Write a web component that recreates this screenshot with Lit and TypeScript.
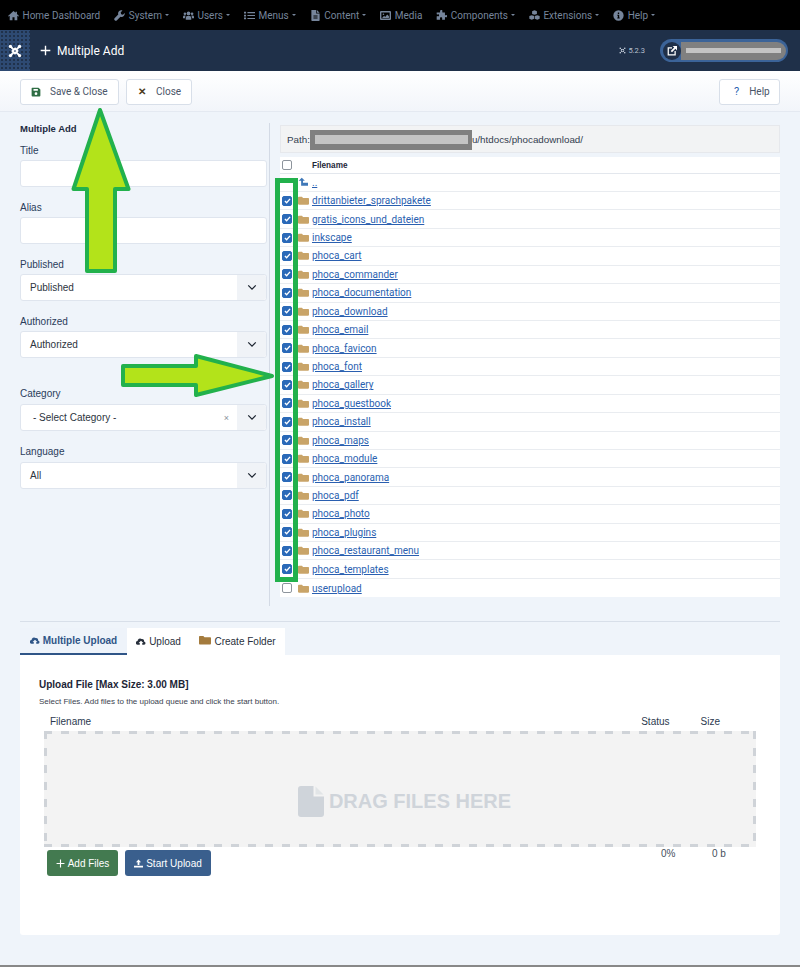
import { LitElement, html, css, svg } from "lit";
import { customElement } from "lit/decorators.js";

const FOLDERS = ["drittanbieter_sprachpakete","gratis_icons_und_dateien","inkscape","phoca_cart","phoca_commander","phoca_documentation","phoca_download","phoca_email","phoca_favicon","phoca_font","phoca_gallery","phoca_guestbook","phoca_install","phoca_maps","phoca_module","phoca_panorama","phoca_pdf","phoca_photo","phoca_plugins","phoca_restaurant_menu","phoca_templates"];

const ic = (d: unknown, cls = "i", vb = "0 0 16 16") => html`<svg class=${cls} viewBox=${vb} fill="currentColor">${d}</svg>`;
const HOME = svg`<path d="M8 1.500 0 8.600l.9 1L2.500 8.200V15h4v-4.500h3V15h4V8.200l1.600 1.400.9-1-3-2.700V2.500h-2v1.600z"/>`;
const WRENCH = svg`<path d="M15.600 4.200 13 6.800l-2.600-.7-.7-2.600L12.300.9C10.600.1 8.500.5 7.200 1.800 5.900 3.100 5.600 5 6.200 6.600L.8 12a2.300 2.300 0 0 0 3.200 3.200l5.400-5.400c1.600.6 3.500.3 4.800-1 1.300-1.300 1.700-3.100 1.400-4.600z"/>`;
const USERS = svg`<circle cx="8" cy="5" r="2.700"/><circle cx="2.800" cy="5.500" r="1.900"/><circle cx="13.200" cy="5.500" r="1.900"/><path d="M4 14v-2.500C4 9.500 5.500 8.500 8 8.500s4 1 4 3V14zM0 12v-2c0-1.300 1-2 2.600-2 .5 0 1 .1 1.300.2C3.200 9 3 10 3 11v1zM16 12v-2c0-1.300-1-2-2.600-2-.5 0-1 .1-1.300.2.700.8.900 1.800.9 2.800v1z"/>`;
const LIST = svg`<path d="M0 2.500h3v2.500H0zM0 6.800h3v2.500H0zM0 11h3v2.500H0zM5 3h11v1.600H5zM5 7.300h11v1.600H5zM5 11.500h11v1.600H5z"/>`;
const FILE = svg`<path d="M2 0h7v5h5v10a1 1 0 0 1-1 1H3a1 1 0 0 1-1-1zM10 0l4 4h-4zM5 8v1.300h6V8zM5 11v1.300h6V11z" fill-rule="evenodd"/>`;
const IMAGE = svg`<path fill-rule="evenodd" d="M1.500 1.500h13A1.500 1.500 0 0 1 16 3v10a1.500 1.500 0 0 1-1.500 1.500h-13A1.500 1.500 0 0 1 0 13V3a1.500 1.500 0 0 1 1.500-1.500zM2 3.500v9h12v-9zM5 5a1.200 1.200 0 1 1 0 2.400A1.200 1.200 0 0 1 5 5zM3 11.500l3-3 1.500 1.500 3-3.500 2.500 2.500v2.500z"/>`;
const PUZZLE = svg`<path d="M6 1.500C6 .6 6.800 0 7.700 0s1.700.6 1.700 1.500c0 .6-.4 1-.4 1.500 0 .4.300.6.800.6H13v3.300c0 .5.200.8.600.8.500 0 .9-.4 1.500-.4.900 0 .9.800.9 1.700s0 1.700-.9 1.700c-.6 0-1-.4-1.500-.4-.4 0-.6.300-.6.800V14H9.500c-.5 0-.8-.2-.8-.6 0-.5.400-.9.400-1.500 0-.9-.8-1.400-1.700-1.400s-1.700.5-1.700 1.400c0 .6.400 1 .4 1.500 0 .4-.3.600-.8.600H1V9.700c0-.5.300-.8.700-.8.500 0 .8.400 1.400.4C4 9.300 4.500 8.600 4.500 7.700S4 6 3.100 6c-.6 0-.9.400-1.400.4-.4 0-.7-.3-.7-.8V3.600h4.300c.5 0 .8-.2.800-.6 0-.5-.6-.9-.1-1.500z"/>`;
const CUBES = svg`<path d="M8 .5l3.500 1.300v3.900L8 7 4.500 5.700V1.800zM4 7.500l3.500 1.300v4L4 14.200.5 12.800v-4zM12 7.500l3.500 1.300v4L12 14.200l-3.500-1.400v-4z"/>`;
const INFO = svg`<path fill-rule="evenodd" d="M8 .5a7.500 7.500 0 1 1 0 15 7.500 7.500 0 0 1 0-15zM7 3.500v2.200h2V3.500zM6.300 7v1.500H7v2.300h-.7v1.500h3.400v-1.500H9V7z"/>`;
const SAVE = svg`<path fill-rule="evenodd" d="M2 1h10l3 3v9.500a1.500 1.500 0 0 1-1.500 1.500h-11A1.500 1.500 0 0 1 1 13.500V2.500A1.500 1.500 0 0 1 2 1zM4 3v3h7V3zM8 8.500a2.200 2.200 0 1 0 0 4.400 2.200 2.200 0 0 0 0-4.400z"/>`;
const CLOUD = svg`<path d="M12.800 7A3 3 0 0 0 9 3.300 4 4 0 0 0 2.500 6.500 3 3 0 0 0 3 12.500h3V9.500H4.200L8 5.800l3.800 3.700H10v3h3a2.800 2.800 0 0 0-.2-5.500z"/>`;
const FOLDER = svg`<path d="M1.300 2.500h4.500l1.500 1.700h7.400c.7 0 1.300.6 1.300 1.300v7.200c0 .7-.6 1.300-1.300 1.300H1.300C.6 14 0 13.400 0 12.700V3.800c0-.7.600-1.300 1.300-1.300z"/>`;
const JOOMLA = svg`<g fill="none" stroke="currentColor" stroke-width="2.200" stroke-linecap="round"><path d="M8 5.200 10.800 8 8 10.800 5.200 8z"/><path d="M3 3l3.200 3.200M13 3 9.800 6.200M3 13l3.200-3.200M13 13l-3.200-3.200"/></g><circle cx="2.800" cy="2.800" r="1.900"/><circle cx="13.200" cy="2.800" r="1.900"/><circle cx="2.800" cy="13.200" r="1.900"/><circle cx="13.200" cy="13.200" r="1.900"/>`;
const PLUS = svg`<path d="M7 1h2v6h6v2H9v6H7V9H1V7h6z"/>`;
const UPLOAD = svg`<path d="M8 1l4.500 4.800H9.600v5H6.400v-5H3.500zM0 12h16v3H0z"/>`;
const BIGFILE = svg`<path d="M3 0h12.500v10.500H26V28a3 3 0 0 1-3 3H3a3 3 0 0 1-3-3V3a3 3 0 0 1 3-3z"/><path d="M17.500 0.500 25.500 8.500h-8z" opacity=".45"/>`;
const CHEV = html`<svg class="chev" viewBox="0 0 12 8" fill="none" stroke="#1c2530" stroke-width="1.500"><path d="M1.500 1.500 6 6l4.500-4.500"/></svg>`;

const NAV: [string, unknown, boolean][] = [["Home Dashboard",HOME,false],["System",WRENCH,true],["Users",USERS,true],["Menus",LIST,true],["Content",FILE,true],["Media",IMAGE,false],["Components",PUZZLE,true],["Extensions",CUBES,true],["Help",INFO,true]];

@customElement("app-root")
export class AppRoot extends LitElement {
  static styles = css`
    :host { display:block; position:relative; width:800px; height:967px; overflow:hidden; background:#eff4fa; font-family:"Liberation Sans",Arial,sans-serif; color:#22314a; font-size:10.500px; box-sizing:border-box; }
    * { box-sizing:border-box; }
    svg { display:block; flex:none; }
    .topnav { height:30px; background:#000; display:flex; align-items:center; padding-left:8px; gap:14px; font-family:Roboto,sans-serif; font-size:10px; color:#76859b; }
    .nav-item { display:flex; align-items:center; gap:3.500px; white-space:nowrap; }
    .nav-item .i { width:11px; height:11px; }
    .caret { width:0; height:0; border:2.750px solid transparent; border-top-color:#76859b; border-bottom:0; margin-left:-.5px; }
    .head { height:41px; background:#1f3049; display:flex; align-items:center; color:#fff; }
    .brand { width:30px; align-self:stretch; background-color:#2e4a72; background-image:radial-gradient(#1f3049 .7px,transparent .9px); background-size:4px 4px; display:flex; align-items:center; justify-content:center; margin-right:10px; }
    .brand svg { width:14px; height:14px; color:#fff; }
    .head .plus { width:11px; height:11px; margin-right:6px; }
    .head-title { font-family:Roboto,sans-serif; font-size:12px; }
    .head-right { margin-left:auto; display:flex; align-items:center; margin-right:12px; }
    .ver { display:flex; align-items:center; gap:2px; font-family:Roboto,sans-serif; font-size:7.500px; color:#b8c2d0; margin-right:15px; }
    .ver svg { width:7px; height:7px; }
    .pill { width:128px; height:23px; border-radius:12px; background:#3b6398; padding:2.500px; display:flex; align-items:center; }
    .pill-in { flex:1; height:18px; border-radius:0 9px 9px 0; background:#808080; display:flex; align-items:center; padding-right:5px; }
    .pill-ic { width:18px; height:18px; border-radius:9px; background:#1f3049; display:flex; align-items:center; justify-content:center; }
    .pill-ic svg { width:10px; height:10px; color:#fff; }
    .pill-bar { flex:1; height:5px; background:#c4c4c4; margin-left:5px; }
    .toolbar { height:41px; background:linear-gradient(#fff,#f2f5fa); border-bottom:1px solid #e4e9f1; display:flex; padding:8px 20px 0; gap:7px; }
    .tbtn { height:26px; background:#fff; border:1px solid #d8dfe9; border-radius:3px; display:flex; align-items:center; color:#4a5568; font-family:Roboto,sans-serif; font-size:10px; padding:0 10px 1px; }
    .tbtn .i { width:10px; height:10px; margin-right:9px; }
    .save { width:99px; } .save .i { color:#2f6d44; }
    .close { width:66px; } .close .x { font-size:10px; margin-right:10px; margin-left:1px; line-height:1; font-weight:bold; color:#4a3a20; }
    .help { width:61px; margin-left:auto; } .help .q { color:#2a5fb0; font-size:11px; margin:0 10px 0 4px; }
    .main { display:flex; padding:11px 20px 0; height:494px; }
    .left { width:247px; }
    .sect { font-weight:bold; font-size:9.500px; line-height:12px; margin-bottom:7px; color:#1c2a40; }
    .lbl { height:18px; line-height:17px; font-size:10px; color:#2a3c5a; }
    .field { margin-bottom:12px; }
    .field.far { margin-bottom:27px; }
    .field.tall .lbl { height:19px; }
    .ctl { height:27px; background:#fff; border:1px solid #dfe5ee; border-radius:3px; display:flex; align-items:center; padding-left:9px; font-size:10px; color:#2c3440; }
    .sel-arrow { margin-left:auto; width:29px; align-self:stretch; background:#f0f3f7; display:flex; align-items:center; justify-content:center; border-radius:0 3px 3px 0; }
    .chev { width:10px; height:7px; }
    .clear { margin-left:auto; color:#8a929c; font-size:9px; margin-right:8px; }
    .clear + .sel-arrow { margin-left:0; }
    .indent { padding-left:3px; }
    .vline { width:1px; background:#d3dae5; margin-left:2px; margin-right:10px; height:483px; }
    .right { width:500px; }
    .path { height:28px; margin-top:2px; padding-top:1px; background:#f2f3f4; border:1px solid #e6e8ec; display:flex; align-items:center; padding-left:6px; font-size:9.800px; color:#33404f; white-space:nowrap; }
    .redact { display:flex; align-items:center; width:162px; height:20px; background:#808080; margin:0; padding:0 4px 0 5px; }
    .redact i { display:block; width:100%; height:9px; background:#c4c4c4; }
    .table { margin-top:4px; background:#fff; }
    .thead { height:16.600px; padding-top:1px; border-bottom:1px solid #e3e7ed; display:flex; align-items:center; font-weight:bold; font-size:8.200px; color:#1e2838; }
    .row { height:18.430px; border-bottom:1px solid #e9ecf0; display:flex; align-items:center; }
    .row:last-child { border-bottom:0; }
    .cb { width:10px; height:10px; border-radius:2px; margin-left:2px; margin-right:6px; flex:none; border:1px solid #8d949c; background:#fff; }
    .cb.on { background:#2a69b8; border-color:#2a69b8; display:flex; align-items:center; justify-content:center; }
    .cb.on svg { width:7px; height:6px; }
    .fname { margin-left:14px; }
    .fold { width:11px; height:11px; color:#c9a468; margin-right:3px; }
    .up { width:10px; height:10px; color:#3f78b8; margin-right:4px; }
    a { color:#2a5fb0; text-decoration:underline; font-family:Roboto,sans-serif; font-size:10px; }
    .sep { height:1px; margin:15px 20px 0; background:#d8dfe9; }
    .tabs { display:flex; margin:6px 20px 0; height:27px; }
    .tab { display:flex; align-items:center; justify-content:center; gap:3px; background:#fff; font-size:10px; color:#28303c; width:63px; }
    .tab .i { width:10px; height:10px; }
    .tab.on { width:107px; background:#eef3fa; font-weight:bold; color:#2f5587; border-bottom:2px solid #2f5587; }
    .tab.w { width:95px; }
    .tab .i.tan { color:#a47b3d; width:12px; height:12px; margin-top:-3px; }
    .panel { margin:0 20px; height:280px; background:#fff; border-radius:0 0 3px 3px; padding:24px 19px 0; position:relative; }
    .ptitle { font-weight:bold; font-size:10px; line-height:12px; color:#1c2536; }
    .psub { font-size:8px; line-height:10px; margin-top:6px; color:#3a424e; }
    .cols { display:flex; margin-top:9px; padding-left:11px; font-size:10px; height:15px; line-height:12px; color:#2c3a50; }
    .cols .st { margin-left:auto; } .cols .sz { margin-left:31px; margin-right:41px; }
    .drop { margin-left:5px; width:712px; height:116px; background-color:#f3f3f3; background-image:repeating-linear-gradient(90deg,#cfd3d8 0 8px,transparent 8px 17px),repeating-linear-gradient(90deg,#cfd3d8 0 8px,transparent 8px 17px),repeating-linear-gradient(#cfd3d8 0 8px,transparent 8px 17px),repeating-linear-gradient(#cfd3d8 0 8px,transparent 8px 17px); background-size:100% 3px,100% 3px,3px 100%,3px 100%; background-position:0 0,0 100%,0 0,100% 0; background-repeat:no-repeat; display:flex; align-items:center; justify-content:center; color:#cfd4da; font-weight:bold; font-size:20px; gap:5px; padding:24px 0 0 9px; }
    .drop svg { width:26px; height:31px; }
    .acts { display:flex; margin:3px 0 0 8px; }
    .btn { height:26px; border-radius:3px; color:#fff; display:flex; align-items:center; font-size:10px; gap:3px; justify-content:center; }
    .btn .i { width:9px; height:9px; }
    .btn.g { width:71px; background:#437a50; }
    .btn.b { width:86px; background:#3a5f8d; margin-left:7px; }
    .stat { display:flex; font-size:10px; color:#46505c; position:absolute; top:193px; left:641px; }
    .stat .p { width:51px; }
    .bottom { position:absolute; left:0; right:0; bottom:0; height:2px; background:#888; }
    .marks { position:absolute; left:0; top:0; pointer-events:none; }
  `;

  render() {
    const check = html`<svg viewBox="0 0 8 7" fill="none" stroke="#fff" stroke-width="1.600"><path d="M1 3.500 3 5.500 7 1"/></svg>`;
    return html`
      <div class="topnav">
        ${NAV.map(([t, d, c]) => html`<div class="nav-item">${ic(d)}<span>${t}</span>${c ? html`<span class="caret"></span>` : ""}</div>`)}
      </div>
      <div class="head">
        <div class="brand">${ic(JOOMLA, "")}</div>
        ${ic(PLUS, "plus")}
        <span class="head-title">Multiple Add</span>
        <div class="head-right">
          <div class="ver">${ic(JOOMLA, "")}5.2.3</div>
          <div class="pill"><div class="pill-ic">${ic(svg`<path fill-rule="evenodd" d="M1 2h7v2H3v9h9V8h2v7H1zM9 0h7v7l-2.500-2.500L8 10 6 8l5.500-5.500z"/>`, "")}</div><div class="pill-in"><div class="pill-bar"></div></div></div>
        </div>
      </div>
      <div class="toolbar">
        <div class="tbtn save">${ic(SAVE)}Save &amp; Close</div>
        <div class="tbtn close"><span class="x">✕</span>Close</div>
        <div class="tbtn help"><span class="q">?</span>Help</div>
      </div>
      <div class="main">
        <div class="left">
          <div class="sect">Multiple Add</div>
          <div class="field"><div class="lbl">Title</div><div class="ctl"></div></div>
          <div class="field"><div class="lbl">Alias</div><div class="ctl"></div></div>
          <div class="field"><div class="lbl">Published</div><div class="ctl">Published<div class="sel-arrow">${CHEV}</div></div></div>
          <div class="field far"><div class="lbl">Authorized</div><div class="ctl">Authorized<div class="sel-arrow">${CHEV}</div></div></div>
          <div class="field tall"><div class="lbl">Category</div><div class="ctl"><span class="indent">- Select Category -</span><span class="clear">×</span><div class="sel-arrow">${CHEV}</div></div></div>
          <div class="field tall"><div class="lbl">Language</div><div class="ctl">All<div class="sel-arrow">${CHEV}</div></div></div>
        </div>
        <div class="vline"></div>
        <div class="right">
          <div class="path">Path:<span class="redact"><i></i></span>u/htdocs/phocadownload/</div>
          <div class="table">
            <div class="thead"><span class="cb"></span><span class="fname">Filename</span></div>
            <div class="row"><span class="cb" style="visibility:hidden"></span>${ic(svg`<path d="M6 1l5 5H8v3h8v5H5V6H1z"/>`, "up")}<a>..</a></div>
            ${FOLDERS.map(f => html`<div class="row"><span class="cb on">${check}</span>${ic(FOLDER, "fold")}<a>${f}</a></div>`)}
            <div class="row"><span class="cb"></span>${ic(FOLDER, "fold")}<a>userupload</a></div>
          </div>
        </div>
      </div>
      <div class="sep"></div>
      <div class="tabs">
        <div class="tab on">${ic(CLOUD)}Multiple Upload</div>
        <div class="tab">${ic(CLOUD)}Upload</div>
        <div class="tab w">${ic(FOLDER, "i tan")}Create Folder</div>
      </div>
      <div class="panel">
        <div class="ptitle">Upload File [Max Size: 3.00 MB]</div>
        <div class="psub">Select Files. Add files to the upload queue and click the start button.</div>
        <div class="cols"><span>Filename</span><span class="st">Status</span><span class="sz">Size</span></div>
        <div class="drop">${ic(BIGFILE, "", "0 0 26 31")}DRAG FILES HERE</div>
        <div class="acts">
          <div class="btn g">${ic(PLUS)}Add Files</div>
          <div class="btn b">${ic(UPLOAD)}Start Upload</div>
        </div>
        <div class="stat"><span class="p">0%</span><span>0 b</span></div>
      </div>
      <div class="bottom"></div>
      <svg class="marks" width="800" height="967">
        <polygon points="100,110 128.500,189 115,189 115,271 87,271 87,189 73.500,189" fill="#b3e31a" stroke="#22b14c" stroke-width="4" stroke-linejoin="round"/>
        <polygon points="123,366 196,366 196,356 272,376 196,395 196,385 123,385" fill="#b3e31a" stroke="#22b14c" stroke-width="4" stroke-linejoin="round"/>
        <rect x="277.500" y="180.500" width="18" height="399" fill="none" stroke="#22b14c" stroke-width="5"/>
      </svg>
    `;
  }
}
